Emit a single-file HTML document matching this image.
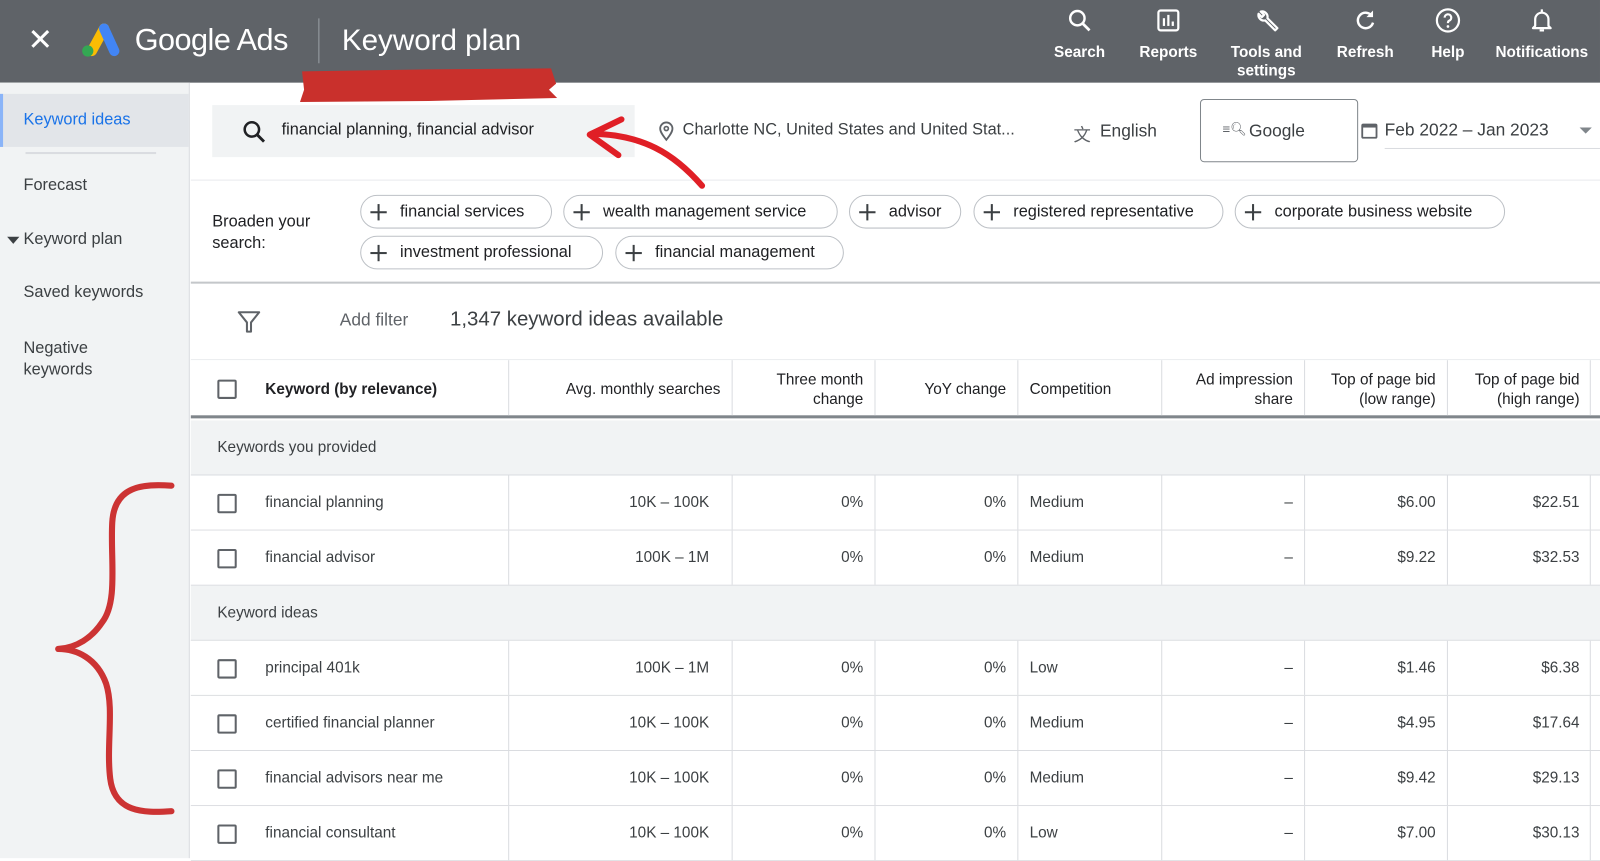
<!DOCTYPE html>
<html><head><meta charset="utf-8">
<style>
*{box-sizing:border-box;margin:0;padding:0}
html,body{width:1600px;height:854px;overflow:hidden;background:#fff;font-family:"Liberation Sans",Arial,sans-serif;color:#3c4043}
#w{position:absolute;left:0;top:0;width:1568px;height:837px;transform:scale(1.0204);transform-origin:0 0;background:#fff}
.a{position:absolute;white-space:nowrap}
#hdr{position:absolute;left:0;top:0;width:1568px;height:81px;background:#5f6368;color:#fff}
.hi{position:absolute;top:7px;text-align:center;font-size:15px;line-height:18px;font-weight:bold;color:#fff}
.hi svg{display:block;margin:0 auto 10px}
#side{position:absolute;left:0;top:81px;width:186px;height:760px;background:#f1f3f4;border-right:1px solid #dadce0}
.sl{position:absolute;left:23px;font-size:16px;color:#3c4043}
.chip{position:absolute;height:33px;border:1px solid #bdc1c6;border-radius:17px;font-size:16px;line-height:31px;padding-left:38px;color:#202124}
.chip:before{content:"";position:absolute;left:9px;top:15px;width:16px;height:2px;background:#3c4043}
.chip:after{content:"";position:absolute;left:16px;top:8px;width:2px;height:16px;background:#3c4043}
.row{position:absolute;left:187px;width:1381px;height:54px;border-bottom:1px solid #dadce0;background:#fff;font-size:15px}
.grp{background:#f1f3f4}
.cb{position:absolute;left:26px;top:18px;width:19px;height:19px;border:2px solid #5f6368;border-radius:2px}
.c{position:absolute;top:0;height:100%;border-left:1px solid #dadce0}
.t{position:absolute;line-height:54px}
.th{position:absolute;font-size:15px;line-height:19px;text-align:right;color:#202124}
</style></head><body><div id="w">

<div id="hdr">
  <div class="a" style="left:27px;top:26px;font-size:30px;line-height:28px;color:#fff">&#x2715;</div>
  <svg class="a" style="left:76px;top:20px" width="42" height="38" viewBox="0 0 42 38">
    <line x1="14" y1="30" x2="26" y2="8" stroke="#fbbc04" stroke-width="10" stroke-linecap="round"/>
    <line x1="26" y1="8" x2="36" y2="30" stroke="#4285f4" stroke-width="10" stroke-linecap="round"/>
    <circle cx="10" cy="30" r="5.5" fill="#34a853"/>
  </svg>
  <div class="a" style="left:132px;top:22px;font-size:30px;line-height:36px;letter-spacing:-0.5px">Google Ads</div>
  <div class="a" style="left:312px;top:18px;width:1px;height:44px;background:#9aa0a6"></div>
  <div class="a" style="left:335px;top:22px;font-size:29px;line-height:36px">Keyword plan</div>

  <div class="hi" style="left:1028px;width:60px"><svg width="26" height="26" viewBox="0 0 24 24"><circle cx="10" cy="10" r="6.5" fill="none" stroke="#fff" stroke-width="2.2"/><line x1="15" y1="15" x2="21" y2="21" stroke="#fff" stroke-width="2.5"/></svg>Search</div>
  <div class="hi" style="left:1110px;width:70px"><svg width="26" height="26" viewBox="0 0 24 24"><rect x="3" y="3" width="18" height="18" rx="2" fill="none" stroke="#fff" stroke-width="2"/><rect x="7" y="10" width="2" height="7" fill="#fff"/><rect x="11" y="7" width="2" height="10" fill="#fff"/><rect x="15" y="13" width="2" height="4" fill="#fff"/></svg>Reports</div>
  <div class="hi" style="left:1196px;width:90px"><svg width="28" height="26" viewBox="0 0 24 24"><path d="M20 21l-9-9a5 5 0 0 1-6-6l3 3 2-2-3-3a5 5 0 0 1 6 6l9 9z" fill="none" stroke="#fff" stroke-width="2" stroke-linejoin="round"/></svg>Tools and<br>settings</div>
  <div class="hi" style="left:1303px;width:70px"><svg width="26" height="26" viewBox="0 0 24 24"><path d="M18 8a7 7 0 1 0 1 6" fill="none" stroke="#fff" stroke-width="2.2"/><path d="M19 3v6h-6z" fill="#fff"/></svg>Refresh</div>
  <div class="hi" style="left:1394px;width:50px"><svg width="28" height="26" viewBox="0 0 24 24"><circle cx="12" cy="12" r="10" fill="none" stroke="#fff" stroke-width="2"/><path d="M9 9.5a3 3 0 1 1 4 2.8c-1 .5-1 1.2-1 2.2" fill="none" stroke="#fff" stroke-width="2"/><circle cx="12" cy="17.5" r="1.2" fill="#fff"/></svg>Help</div>
  <div class="hi" style="left:1458px;width:106px"><svg width="26" height="26" viewBox="0 0 24 24"><path d="M6 17V11a6 6 0 0 1 12 0v6l2 2H4z" fill="none" stroke="#fff" stroke-width="2" stroke-linejoin="round"/><rect x="11" y="2" width="2" height="3" fill="#fff"/><path d="M10 21h4" stroke="#fff" stroke-width="2"/></svg>Notifications</div>
</div>

<div id="side">
  <div class="a" style="left:0;top:11px;width:185px;height:52px;background:#e2e5e9;border-left:3px solid #8ab4f8"></div>
  <div class="sl" style="top:28px;color:#1a73e8">Keyword ideas</div>
  <div class="a" style="left:25px;top:68px;width:128px;height:2px;background:#dadce0"></div>
  <div class="sl" style="top:92px">Forecast</div>
  <div class="a" style="left:7px;top:151px;width:0;height:0;border-left:6px solid transparent;border-right:6px solid transparent;border-top:7px solid #3c4043"></div>
  <div class="sl" style="top:145px">Keyword plan</div>
  <div class="sl" style="top:197px">Saved keywords</div>
  <div class="sl" style="top:250px;line-height:21px">Negative<br>keywords</div>
</div>

<div class="a" style="left:208px;top:103px;width:414px;height:51px;background:#f1f3f4"></div>
<svg class="a" style="left:236px;top:116px" width="26" height="26" viewBox="0 0 24 24"><circle cx="10" cy="10" r="6.5" fill="none" stroke="#202124" stroke-width="2.3"/><line x1="15" y1="15" x2="21" y2="21" stroke="#202124" stroke-width="2.6"/></svg>
<div class="a" style="left:276px;top:119px;font-size:16px;color:#202124">financial planning, financial advisor</div>
<svg class="a" style="left:645px;top:119px" width="16" height="20" viewBox="0 0 16 20"><path d="M8 18C4 13 2 10 2 7a6 6 0 0 1 12 0c0 3-2 6-6 11z" fill="none" stroke="#5f6368" stroke-width="1.8"/><circle cx="8" cy="7" r="2" fill="none" stroke="#5f6368" stroke-width="1.6"/></svg>
<div class="a" style="left:669px;top:119px;font-size:16px;color:#3c4043">Charlotte NC, United States and United Stat...</div>
<div class="a" style="left:1052px;top:118px;font-size:17px;color:#5f6368">&#x6587;</div>
<div class="a" style="left:1078px;top:119px;font-size:17px;color:#3c4043">English</div>
<div class="a" style="left:1176px;top:97px;width:155px;height:62px;border:1px solid #80868b;border-radius:4px"></div>
<div class="a" style="left:1198px;top:119px;font-size:13px;color:#5f6368">&#x2261;&#x1F50D;&#xFE0E;</div>
<div class="a" style="left:1224px;top:119px;font-size:17px;color:#3c4043">Google</div>
<svg class="a" style="left:1333px;top:119px" width="18" height="18" viewBox="0 0 18 18"><rect x="2" y="3" width="14" height="13" rx="1" fill="none" stroke="#5f6368" stroke-width="1.8"/><rect x="2" y="3" width="14" height="3" fill="#5f6368"/></svg>
<div class="a" style="left:1357px;top:118px;font-size:17px;color:#3c4043">Feb 2022 – Jan 2023</div>
<div class="a" style="left:1548px;top:125px;width:0;height:0;border-left:6px solid transparent;border-right:6px solid transparent;border-top:6px solid #80868b"></div>
<div class="a" style="left:1357px;top:145px;width:211px;height:1px;background:#dadce0"></div>

<div class="a" style="left:187px;top:176px;width:1381px;height:1px;background:#e8eaed"></div>
<div class="a" style="left:208px;top:207px;font-size:16px;line-height:21px;color:#202124">Broaden your<br>search:</div>
<div class="chip" style="left:353px;top:191px;width:188px">financial services</div>
<div class="chip" style="left:552px;top:191px;width:269px">wealth management service</div>
<div class="chip" style="left:832px;top:191px;width:110px">advisor</div>
<div class="chip" style="left:954px;top:191px;width:245px">registered representative</div>
<div class="chip" style="left:1210px;top:191px;width:265px">corporate business website</div>
<div class="chip" style="left:353px;top:231px;width:238px">investment professional</div>
<div class="chip" style="left:603px;top:231px;width:224px">financial management</div>
<div class="a" style="left:187px;top:276px;width:1381px;height:2px;background:#c4c7ca"></div>

<svg class="a" style="left:232px;top:303px" width="24" height="24" viewBox="0 0 24 24"><path d="M2 3h20l-8 10v9h-4v-9z" fill="none" stroke="#5f6368" stroke-width="2" stroke-linejoin="round"/></svg>
<div class="a" style="left:333px;top:304px;font-size:17px;color:#5f6368">Add filter</div>
<div class="a" style="left:441px;top:302px;font-size:20px;color:#3c4043">1,347 keyword ideas available</div>

<div class="a" style="left:187px;top:352px;width:1381px;height:1px;background:#e8eaed"></div>
<div class="row" style="top:353px;height:57px;border-bottom:3px solid #80868b">
  <div class="cb" style="top:19px"></div>
  <div class="th" style="left:73px;top:19px;text-align:left;font-weight:bold">Keyword (by relevance)</div>
  <div class="c" style="left:311px"></div><div class="c" style="left:530px"></div><div class="c" style="left:670px"></div><div class="c" style="left:810px"></div><div class="c" style="left:951px"></div><div class="c" style="left:1091px"></div><div class="c" style="left:1231px"></div><div class="c" style="left:1371px"></div>
  <div class="th" style="right:862px;top:19px">Avg. monthly searches</div>
  <div class="th" style="right:722px;top:10px">Three month<br>change</div>
  <div class="th" style="right:582px;top:19px">YoY change</div>
  <div class="th" style="left:822px;top:19px;text-align:left">Competition</div>
  <div class="th" style="right:301px;top:10px">Ad impression<br>share</div>
  <div class="th" style="right:161px;top:10px">Top of page bid<br>(low range)</div>
  <div class="th" style="right:20px;top:10px">Top of page bid<br>(high range)</div>
</div>

<div class="row grp" style="top:412px"><div class="t" style="left:26px">Keywords you provided</div></div>
<div class="row grp" style="top:574px"><div class="t" style="left:26px">Keyword ideas</div></div>

<div id="rows"></div>
<script>
var d=[[466,"financial planning","10K – 100K","Medium","$6.00","$22.51"],[520,"financial advisor","100K – 1M","Medium","$9.22","$32.53"],[628,"principal 401k","100K – 1M","Low","$1.46","$6.38"],[682,"certified financial planner","10K – 100K","Medium","$4.95","$17.64"],[736,"financial advisors near me","10K – 100K","Medium","$9.42","$29.13"],[790,"financial consultant","10K – 100K","Low","$7.00","$30.13"]];
var h="";
d.forEach(function(r){h+='<div class="row" style="top:'+r[0]+'px"><div class="cb"></div><div class="t" style="left:73px">'+r[1]+'</div>'+
'<div class="c" style="left:311px"></div><div class="c" style="left:530px"></div><div class="c" style="left:670px"></div><div class="c" style="left:810px"></div><div class="c" style="left:951px"></div><div class="c" style="left:1091px"></div><div class="c" style="left:1231px"></div><div class="c" style="left:1371px"></div>'+
'<div class="t" style="right:873px">'+r[2]+'</div><div class="t" style="right:722px">0%</div><div class="t" style="right:582px">0%</div><div class="t" style="left:822px">'+r[3]+'</div><div class="t" style="right:301px">–</div><div class="t" style="right:161px">'+r[4]+'</div><div class="t" style="right:20px">'+r[5]+'</div></div>';});
document.getElementById("rows").innerHTML=h;
</script>

<svg class="a" style="left:0;top:0" width="1568" height="837" viewBox="0 0 1568 837">
  <path d="M296 70 L420 68 L540 67 L545 82 L538 88 L546 96 L420 99 L294 100 L298 88 Z" fill="#c9302c"/>
  <path d="M688 182 C660 150 630 132 580 131" fill="none" stroke="#e01f26" stroke-width="6" stroke-linecap="round"/>
  <path d="M609 117 L578 132 L606 152" fill="none" stroke="#e01f26" stroke-width="6" stroke-linecap="round" stroke-linejoin="round"/>
  <path d="M168 476 C140 474 112 476 110 512 C108 547 116 590 100 610 C90 625 75 635 57 636 C75 636 95 645 104 670 C112 695 104 730 108 763 C112 796 140 797 168 795" fill="none" stroke="#cc3333" stroke-width="6" stroke-linecap="round" stroke-linejoin="round"/>
</svg>
</div></body></html>
